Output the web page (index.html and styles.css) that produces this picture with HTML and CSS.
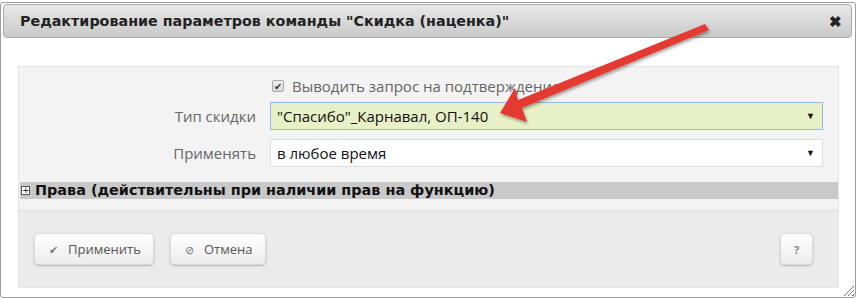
FILE: index.html
```html
<!DOCTYPE html>
<html lang="ru">
<head>
    <meta charset="UTF-8">
    <title>Редактирование параметров команды</title>
    <link rel="stylesheet" href="styles.css">
</head>
<body>

<div class="dialog">
    <div class="titlebar">
        <span class="title">Редактирование параметров команды "Скидка (наценка)"</span>
        <span class="close">&#10006;</span>
    </div>

    <div class="panel">
        <div class="check-row">
            <span class="checkbox">&#10004;</span>
            <span>Выводить запрос на подтверждение</span>
        </div>
        <div class="form-row">
            <label>Тип скидки</label>
            <div class="select active">"Спасибо"_Карнавал, ОП-140<span class="caret">&#9660;</span></div>
        </div>
        <div class="form-row">
            <label>Применять</label>
            <div class="select">в любое время<span class="caret">&#9660;</span></div>
        </div>

        <div class="section">
            <span class="plus">+</span>Права (действительны при наличии прав на функцию)
        </div>

        <div class="footer">
            <button class="btn"><span class="ico">&#10004;</span>Применить</button>
            <button class="btn"><span class="ico">&#8856;</span>Отмена</button>
            <button class="btn help">?</button>
        </div>
    </div>

    <span class="grip"></span>
</div>

<svg class="arrow" width="858" height="299" viewBox="0 0 858 299">
    <defs>
        <filter id="sh" x="-10%" y="-10%" width="130%" height="130%">
            <feDropShadow dx="1" dy="2" stdDeviation="1.5" flood-color="#000" flood-opacity="0.35"/>
        </filter>
    </defs>
    <g filter="url(#sh)" fill="#e33b30">
        <path d="M705 24 L709 30 L522 108 L527 122 L500 113 L515 88 L518 100 Z"/>
    </g>
</svg>

</body>
</html>
```

FILE: styles.css
```css
* {
    margin: 0;
    padding: 0;
    box-sizing: border-box;
}

body {
    background: #fff;
    font-family: "Open Sans", Arial, sans-serif;
    width: 858px;
    height: 299px;
    overflow: hidden;
    position: relative;
}

.dialog {
    position: relative;
    margin-top: 2px;
    width: 856px;
    height: 296px;
    border: 1px solid #9d9d9d;
    border-radius: 3px;
    background: #fff;
    padding: 1px 3px 0 2px;
}

.titlebar {
    display: flex;
    justify-content: space-between;
    align-items: center;
    height: 34px;
    border: 1px solid #ababab;
    border-radius: 4px;
    background: linear-gradient(#e9e9e9, #c9c9c9);
    padding: 0 9px 0 16px;
}

.title {
    font-family: "DejaVu Sans", Verdana, sans-serif;
    font-weight: bold;
    font-size: 14.3px;
    color: #222;
}

.close {
    font-size: 15px;
    font-weight: bold;
    color: #222;
}

.panel {
    margin: 28px 0 0 15px;
    width: 821px;
    height: 222px;
    border: 1px solid #e4e4e4;
    background: #f3f3f3;
    display: flex;
    flex-direction: column;
}

.check-row {
    display: flex;
    align-items: center;
    gap: 8px;
    margin: 10px 0 0 253px;
    font-size: 15px;
    color: #666;
    height: 18px;
}

.checkbox {
    width: 12px;
    height: 12px;
    border: 1px solid #aaa;
    border-radius: 2px;
    background: linear-gradient(#f4f4f4, #d8d8d8);
    font-size: 10px;
    line-height: 10px;
    text-align: center;
    color: #333;
}

.form-row {
    display: flex;
    align-items: center;
    margin-top: 9px;
}

.check-row + .form-row {
    margin-top: 7px;
}

.form-row label {
    width: 237px;
    text-align: right;
    font-size: 15px;
    color: #666;
}

.select {
    position: relative;
    margin-left: 14px;
    width: 553px;
    height: 28px;
    border: 1px solid #ddd;
    background: #fff;
    font-size: 15px;
    color: #111;
    line-height: 26px;
    padding-left: 6px;
}

.select.active {
    background: #e7f0c6;
    border-color: #93b8e6;
}

.caret {
    position: absolute;
    right: 7px;
    top: 0;
    font-size: 9px;
    color: #111;
}

.section {
    margin-top: 15px;
    margin-left: 1px;
    height: 17px;
    background: #c9c9c9;
    font-family: "DejaVu Sans", Verdana, sans-serif;
    font-weight: bold;
    font-size: 14.4px;
    line-height: 17px;
    color: #111;
    display: flex;
    align-items: center;
}

.plus {
    width: 9px;
    height: 9px;
    border: 1px solid #555;
    background: #fff;
    font-size: 9px;
    line-height: 7px;
    text-align: center;
    font-weight: normal;
    margin: 0 5px 0 1px;
}

.footer {
    margin-top: 11px;
    flex: 1;
    border-top: 1px solid #dedede;
    background: #ebebeb;
    display: flex;
    align-items: flex-start;
    gap: 16px;
    padding: 22px 25px 0 15px;
}

.btn {
    height: 32px;
    padding: 0 14px;
    border: 1px solid #dcdcdc;
    border-radius: 5px;
    background: linear-gradient(#ffffff, #ececec);
    box-shadow: 0 1px 2px rgba(0, 0, 0, 0.25);
    font-family: "Open Sans", Arial, sans-serif;
    font-size: 13px;
    color: #555;
    display: flex;
    align-items: center;
    gap: 10px;
}

.btn:first-child {
    width: 120px;
}

.btn:nth-child(2) {
    width: 96px;
}

.ico {
    font-size: 11px;
    color: #777;
}

.help {
    margin-left: auto;
    width: 33px;
    justify-content: center;
    padding: 0;
    font-weight: bold;
    font-size: 11px;
    color: #888;
}

.grip {
    position: absolute;
    right: 1px;
    bottom: 1px;
    width: 11px;
    height: 11px;
    background: repeating-linear-gradient(135deg, transparent 0 2px, #777 2px 3px);
    clip-path: polygon(100% 0, 100% 100%, 0 100%);
}

.arrow {
    position: absolute;
    left: 0;
    top: 0;
}
```
